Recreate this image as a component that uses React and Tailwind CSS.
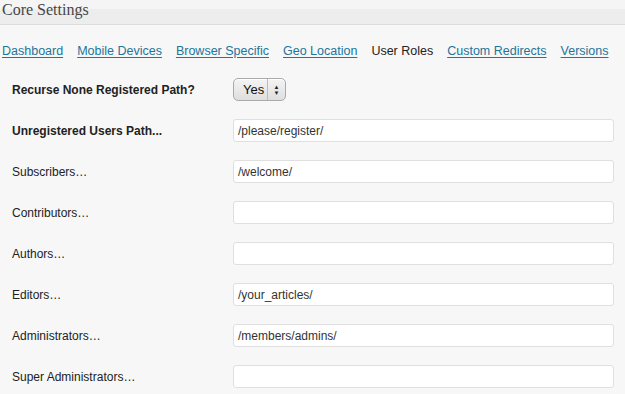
export default function App() {
  const tabs = ['Dashboard', 'Mobile Devices', 'Browser Specific', 'Geo Location', 'User Roles', 'Custom Redirects', 'Versions'];
  const rows = [
    { label: 'Unregistered Users Path...', value: '/please/register/', bold: true },
    { label: 'Subscribers…', value: '/welcome/' },
    { label: 'Contributors…', value: '' },
    { label: 'Authors…', value: '' },
    { label: 'Editors…', value: '/your_articles/' },
    { label: 'Administrators…', value: '/members/admins/' },
    { label: 'Super Administrators…', value: '' },
  ];

  return (
    <div className="w-[625px] h-[394px] overflow-hidden bg-[#f7f7f7] font-['Liberation_Sans',Arial,sans-serif] text-[#333]">
      {/* Header */}
      <div className="h-[9px] bg-[#f5f5f5]" />
      <div className="relative h-[16px] bg-[#ededed] border-b border-[#dcdcdc]">
        <h2 className="absolute left-[2px] top-[-9px] text-[16px] leading-[20px] text-[#464646] font-['Liberation_Serif',Georgia,serif]">
          Core Settings
        </h2>
      </div>

      {/* Tabs */}
      <div className="flex items-center gap-[14px] pl-[2px] mt-[18px] h-[16px] text-[12.5px] whitespace-nowrap">
        {tabs.map((t) =>
          t === 'User Roles' ? (
            <span key={t} className="shrink-0 text-[#222]">{t}</span>
          ) : (
            <a key={t} className="shrink-0 text-[#21759b] underline underline-offset-[2px]">{t}</a>
          )
        )}
      </div>

      {/* Form */}
      <div className="mt-[10px]">
        <div className="flex items-center h-[41px]">
          <div className="w-[233px] pl-[12px] text-[12px] font-bold text-[#222]">Recurse None Registered Path?</div>
          <div className="flex items-stretch h-[23px] w-[53px] rounded-[5px] border border-[#aaa] bg-gradient-to-b from-[#f4f4f4] to-[#dedede] shadow-[inset_0_1px_0_#fff]">
            <span className="flex-1 flex items-center pl-[9px] text-[13px] text-[#111]">Yes</span>
            <span className="w-[18px] border-l border-[#bbb] flex flex-col items-center justify-center text-[6px] leading-[6px] text-[#222]">
              <span>▲</span>
              <span>▼</span>
            </span>
          </div>
        </div>
        {rows.map((r) => (
          <div key={r.label} className="flex items-center h-[41px]">
            <div className={`w-[233px] pl-[12px] text-[12px] text-[#222] ${r.bold ? 'font-bold' : ''}`}>{r.label}</div>
            <div className="w-[381px] h-[23px] bg-white border border-[#dfdfdf] rounded-[3px] flex items-center pl-[4px] text-[12px] text-[#333]">
              {r.value}
            </div>
          </div>
        ))}
      </div>
    </div>
  );
}
